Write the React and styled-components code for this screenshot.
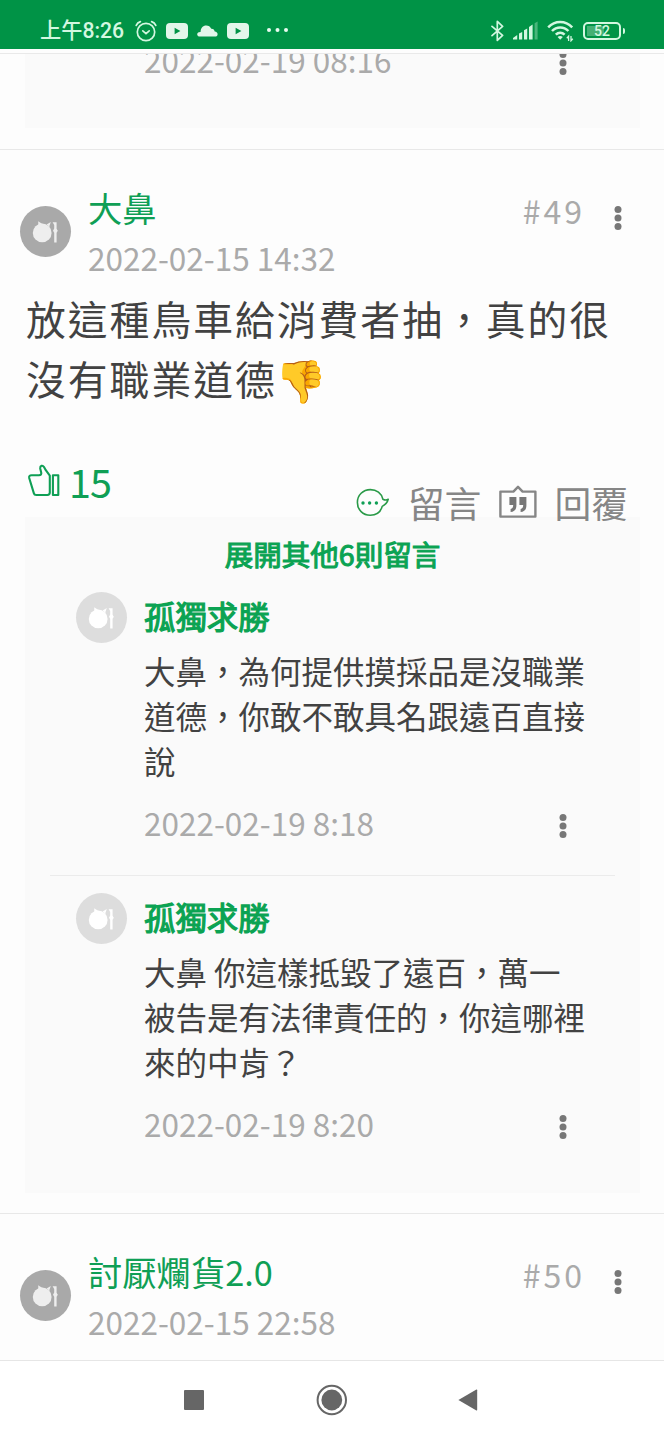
import React from 'react';
import styled, { createGlobalStyle } from 'styled-components';

const GlobalStyle = createGlobalStyle`
    * { box-sizing: border-box; }
    body {
        margin: 0;
        background: #fdfdfd;
        font-family: "Noto Sans CJK TC", "Noto Sans", sans-serif;
    }
    svg { display: block; flex: none; }
`

const Phone = styled.div`
    width: 664px;
    height: 1440px;
    display: flex;
    flex-direction: column;
    overflow: hidden;
`

const StatusBar = styled.header`
    height: 49px;
    flex: none;
    padding: 12px 39px 0 40px;
    display: flex;
    align-items: center;
    justify-content: space-between;
    background: #009346;
    color: #d3f7e0;
`

const StatusGroup = styled.div`
    display: flex;
    align-items: center;
    gap: 9px;
`

const Time = styled.span`
    margin-right: 1.5px;
    font-family: Roboto, "Noto Sans CJK TC", sans-serif;
    font-size: 21.2px;
    font-weight: 500;
    line-height: 24px;
    white-space: nowrap;
`

const MoreWrap = styled.span`
    margin-left: 8px;
    margin-top: -2px;
`

const Feed = styled.main`
    flex: 1;
    min-height: 0;
    margin-top: 4px;
    border-top: 1px solid #e9e9e9;
    border-bottom: 1px solid #e6e6e6;
    overflow: hidden;
`

const Panel = styled.section`
    margin: 0 24px 0 25px;
    padding-bottom: 17px;
    background: #fafafa;
`

const TailPanel = styled(Panel)`
    display: flow-root;
    height: 74px;
    margin-bottom: 21px;
    padding: 0 25px;
`

const Post = styled.article`
    border-top: 1px solid #e8e8e8;
    padding-top: 32px;
    padding-bottom: 20px;
`

const PostHead = styled.div`
    display: flex;
    height: 100px;
    padding: 0 32px 0 20px;
`

const AvatarBox = styled.div`
    width: 51px;
    height: 51px;
    flex: none;
    margin-top: ${(p) => p.top || 0}px;
    margin-right: 17px;
    border-radius: 50%;
    background: ${(p) => (p.light ? '#dddddd' : '#a9a9a9')};
    color: ${(p) => (p.light ? '#ffffff' : '#eeeeee')};
`

const Who = styled.div`
    flex: 1;
`

const Name = styled.div`
    font-size: 34.3px;
    line-height: 50px;
    color: #0f9f55;
`

const DateText = styled.div`
    font-size: 31.5px;
    line-height: ${(p) => p.lh || 50}px;
    color: #aaaaaa;
    white-space: nowrap;
`

const Floor = styled.div`
    font-size: 32px;
    line-height: 56px;
    letter-spacing: 3px;
    color: #aaaaaa;
`

const MenuButton = styled.button`
    width: 28px;
    height: 38px;
    padding: 0;
    border: 0;
    margin-top: ${(p) => p.top || 0}px;
    margin-left: ${(p) => p.left || 0}px;
    display: flex;
    align-items: center;
    justify-content: center;
    background: none;
    color: #777777;
`

const Body = styled.p`
    margin: 6px 26px 0;
    font-size: 39.8px;
    line-height: 60px;
    letter-spacing: 2px;
    color: #424242;
`

const Emoji = styled.span`
    margin-left: -2px;
    font-size: 41.5px;
    line-height: 0;
    vertical-align: -1px;
`

const Actions = styled.div`
    position: relative;
    z-index: 1;
    height: 109px;
    padding: 0 36px 0 26px;
    display: flex;
    justify-content: space-between;
`

const Likes = styled.div`
    display: flex;
    height: 48px;
    margin-top: 50px;
    gap: 7px;
    align-items: center;
    font-size: 39.6px;
    letter-spacing: -1px;
    color: #0f9f55;
`

const LikeCount = styled.span`
    line-height: 46px;
    padding-bottom: 2px;
`

const Replies = styled.div`
    display: flex;
    height: 48px;
    margin-top: 70px;
    align-items: center;
    font-size: 36.8px;
    color: #868686;
    white-space: nowrap;
`

const ActionText = styled.span`
    line-height: 48px;
    margin-left: ${(p) => p.left}px;
    margin-right: ${(p) => p.right || 0}px;
`

const Expand = styled.div`
    padding-top: 16px;
    font-size: 28.5px;
    line-height: 42px;
    text-align: center;
    color: #0ba353;
    -webkit-text-stroke: 1.1px #0ba353;
`

const Comment = styled.div`
    display: flex;
    height: 300px;
    margin: 0 25px;
    padding: 17px 0 0 26px;
`

const Divider = styled.div`
    height: 1px;
    margin: 0 25px;
    background: #ebebeb;
`

const CommentMain = styled.div`
    width: 443px;
`

const CommentName = styled.div`
    font-size: 31.4px;
    line-height: 47px;
    color: #0ba353;
    -webkit-text-stroke: 1.2px #0ba353;
`

const CommentText = styled.p`
    margin: 9px 0 16px;
    font-size: 31.5px;
    line-height: 45px;
    color: #424242;
`

const CommentFoot = styled.div`
    display: flex;
    justify-content: space-between;
    padding-right: 10px;
`

const TailFoot = styled(CommentFoot)`
    width: 443px;
    margin-left: 94px;
    margin-top: -18px;
`

const NavBar = styled.nav`
    height: 79px;
    flex: none;
    padding: 0 186px 1px 184px;
    display: flex;
    align-items: center;
    justify-content: space-between;
    background: #ffffff;
    color: #666666;
`

const Dots = () => (
    <svg width="8" height="26" viewBox="0 0 8 26" fill="currentColor">
        <circle cx="4" cy="4.5" r="3.5" />
        <circle cx="4" cy="13" r="3.5" />
        <circle cx="4" cy="21.5" r="3.5" />
    </svg>
)

const Avatar = ({ light, top }) => (
    <AvatarBox light={light ? 1 : 0} top={top}>
        <svg width="51" height="51" viewBox="0 0 51 51" fill="currentColor">
            <circle cx="22.2" cy="26.9" r="9.4" />
            <path d="M18.2 15.2 L22.4 18 L18.4 19.6 Z" />
            <path d="M30.8 16 L26.6 18.4 L29.2 20.8 Z" />
            <path d="M32.6 16.2 H36.6 V22.8 L37.8 24.7 L36.6 26.8 V36.4 H34.2 V26.8 L33 24.7 L34.2 22.6 V19 Z" />
        </svg>
    </AvatarBox>
)

const AlarmIcon = () => (
    <svg width="22" height="22" viewBox="0 0 22 22" fill="none" stroke="currentColor" strokeWidth="1.7" strokeLinecap="round">
        <circle cx="11" cy="12" r="8.7" />
        <path d="M7.8 10.8 L11 13.6 L14.2 10.8" />
        <path d="M1.2 5.4 C2 3.6 3.6 2.2 5.4 1.6 M20.8 5.4 C20 3.6 18.4 2.2 16.6 1.6" />
    </svg>
)

const VideoIcon = () => (
    <svg width="22" height="16" viewBox="0 0 22 16">
        <rect width="22" height="16" rx="4" fill="#e2f6ea" />
        <path d="M8.6 4.8 L14.4 8 L8.6 11.2 Z" fill="#009346" />
    </svg>
)

const CloudIcon = () => (
    <svg width="21" height="12" viewBox="0 0 21 12" fill="#e2f6ea">
        <path d="M3 11.5 C1 11.5 0 10.3 0.2 8.9 C0.4 7.6 1.8 6.8 3.6 7 C3.6 2.9 6 0.4 9.2 0.4 C11.5 0.4 13.4 1.6 14.3 3.7 C16.4 3.6 17.4 4.8 17.7 6.6 C19.6 6.8 20.6 7.9 20.6 9.2 C20.6 10.7 19.6 11.5 18 11.5 Z" />
    </svg>
)

const MoreIcon = () => (
    <svg width="24" height="6" viewBox="0 0 24 6" fill="#e8fbf0">
        <circle cx="3" cy="3" r="2" />
        <circle cx="11.5" cy="3" r="2" />
        <circle cx="20" cy="3" r="2" />
    </svg>
)

const BluetoothIcon = () => (
    <svg width="13" height="22" viewBox="0 0 13 22" fill="none" stroke="currentColor" strokeWidth="1.7" strokeLinejoin="round" strokeLinecap="round">
        <path d="M1 6.4 L11.6 15.4 L6.3 20.4 V1.4 L11.6 6.4 L1 15.6" />
    </svg>
)

const SignalIcon = () => (
    <svg width="25" height="19" viewBox="0 0 25 19" fill="currentColor">
        <path d="M0 18.5 V17 L4.2 14 V18.5 Z M6 12.6 L9.2 11 V18.5 H6 Z M11 9.3 L14.2 7.5 V18.5 H11 Z M16 6 L19.6 3.6 V18.5 H16 Z" />
        <path d="M21.6 2.2 L24.6 0.4 V18.5 H21.6 Z" opacity="0.35" />
    </svg>
)

const WifiIcon = () => (
    <svg width="27" height="22" viewBox="0 0 27 22" fill="none" stroke="currentColor" strokeWidth="2.5">
        <path d="M1.2 7.4 C8 0.2 18.4 0.2 25.2 7.4" />
        <path d="M5 11 C9.6 6.2 16.8 6.2 21.4 11" />
        <path d="M8.8 14.6 C11.4 12 15 12 17.6 14.6" />
        <path d="M13.2 19.8 L10.6 17 C12 15.8 14.4 15.8 15.8 17 Z" fill="currentColor" stroke="none" />
        <path d="M21.6 21 V16.2 L19.8 18.2 M24 16 V20.8 L25.8 18.8" strokeWidth="1.3" />
    </svg>
)

const Battery = styled.div`
    display: flex;
    align-items: center;
    gap: 2px;
`

const BatteryCell = styled.div`
    width: 38px;
    height: 18px;
    border: 2px solid currentColor;
    border-radius: 5px;
    padding: 1px;
    font: 500 14px/13px Roboto, sans-serif;
    text-align: center;
    background: linear-gradient(90deg, #45b074 17px, transparent 17px) 2px 2px / 34px 10px no-repeat;
`

const BatteryTip = styled.div`
    width: 2px;
    height: 6px;
    border-radius: 0 2px 2px 0;
    background: currentColor;
`

const ThumbIcon = () => (
    <svg width="36" height="36" viewBox="0 0 36 36" fill="none" stroke="#0f9f55" strokeWidth="2.1" strokeLinejoin="round">
        <path d="M3.2 14 C2.8 12 3.8 11.2 5.6 11.2 H13 C14.8 11.2 15.6 10.2 15.2 8.6 L14.2 4.4 C14 1.6 16.6 0.8 18 3 L19.8 6.2 L23.8 11.6 V28.6 C23.8 30.2 23 31 21.4 31 H10.2 C8.8 31 8.2 30.6 7.9 29.4 Z" />
        <rect x="26.9" y="11.2" width="5.4" height="19.8" />
    </svg>
)

const BubbleIcon = () => (
    <svg width="34" height="28" viewBox="0 1 34 28" fill="none" stroke="#2a9a48" strokeWidth="1.6" strokeLinejoin="round">
        <path d="M32.2 12.3 C30.4 13.3 28.8 13.2 26.9 12.2 C25.5 6.4 20.6 2.6 14.4 2.6 C7 2.6 1.4 8.2 1.4 15.4 C1.4 22.8 7 28.2 14.2 28.2 C19.8 28.2 24.6 25.2 26.2 19.4 C29.2 17.8 31.4 15.6 32.2 12.3 Z" />
        <g fill="#0f9f55" stroke="none">
            <circle cx="7" cy="16" r="1.7" />
            <circle cx="13.6" cy="16" r="1.7" />
            <circle cx="20.4" cy="16" r="1.7" />
        </g>
    </svg>
)

const QuoteIcon = () => (
    <svg width="38" height="34" viewBox="0 0 38 34" fill="none" stroke="#868686" strokeWidth="2.4" strokeLinejoin="round">
        <path d="M1.4 6.6 H14.4 L19 1.8 L23.6 6.6 H36.4 V31.6 H1.4 Z" />
        <path d="M10.4 12 H17.4 V20.4 C17.4 24.4 15.4 26.8 11.6 27 V24 C13.4 23.6 14.2 22.4 14.2 20 H10.4 Z M20.4 12 H27.4 V20.4 C27.4 24.4 25.4 26.8 21.6 27 V24 C23.4 23.6 24.2 22.4 24.2 20 H20.4 Z" fill="#777777" stroke="none" />
    </svg>
)

const comments = [
    {
        name: '孤獨求勝',
        text: '大鼻，為何提供摸採品是沒職業道德，你敢不敢具名跟遠百直接說',
        date: '2022-02-19 8:18',
    },
    {
        name: '孤獨求勝',
        text: '大鼻 你這樣抵毀了遠百，萬一被告是有法律責任的，你這哪裡來的中肯？',
        date: '2022-02-19 8:20',
    },
]

const Head = ({ name, date, floor }) => (
    <PostHead>
        <Avatar top={24} />
        <Who>
            <Name>{name}</Name>
            <DateText>{date}</DateText>
        </Who>
        <Floor>{floor}</Floor>
        <MenuButton top={17} left={19}><Dots /></MenuButton>
    </PostHead>
)

const App = () => {
    return (
        <>
            <GlobalStyle />
            <Phone>
                <StatusBar>
                    <StatusGroup>
                        <Time>上午8:26</Time>
                        <AlarmIcon />
                        <VideoIcon />
                        <CloudIcon />
                        <VideoIcon />
                        <MoreWrap><MoreIcon /></MoreWrap>
                    </StatusGroup>
                    <StatusGroup>
                        <BluetoothIcon />
                        <SignalIcon />
                        <WifiIcon />
                        <Battery>
                            <BatteryCell>52</BatteryCell>
                            <BatteryTip />
                        </Battery>
                    </StatusGroup>
                </StatusBar>

                <Feed>
                    <TailPanel>
                        <TailFoot>
                            <DateText lh={46}>2022-02-19 08:16</DateText>
                            <MenuButton top={8}><Dots /></MenuButton>
                        </TailFoot>
                    </TailPanel>

                    <Post>
                        <Head name="大鼻" date="2022-02-15 14:32" floor="#49" />
                        <Body>放這種鳥車給消費者抽，真的很沒有職業道德<Emoji>👎</Emoji></Body>
                        <Actions>
                            <Likes>
                                <ThumbIcon />
                                <LikeCount>15</LikeCount>
                            </Likes>
                            <Replies>
                                <BubbleIcon />
                                <ActionText left={18} right={18}>留言</ActionText>
                                <QuoteIcon />
                                <ActionText left={17}>回覆</ActionText>
                            </Replies>
                        </Actions>
                        <Panel>
                            <Expand>展開其他6則留言</Expand>
                            {comments.map((item, idx) => (
                                <React.Fragment key={idx}>
                                    {idx > 0 && <Divider />}
                                    <Comment>
                                        <Avatar light />
                                        <CommentMain>
                                            <CommentName>{item.name}</CommentName>
                                            <CommentText>{item.text}</CommentText>
                                            <CommentFoot>
                                                <DateText lh={46}>{item.date}</DateText>
                                                <MenuButton top={8}><Dots /></MenuButton>
                                            </CommentFoot>
                                        </CommentMain>
                                    </Comment>
                                </React.Fragment>
                            ))}
                        </Panel>
                    </Post>

                    <Post>
                        <Head name="討厭爛貨2.0" date="2022-02-15 22:58" floor="#50" />
                    </Post>
                </Feed>

                <NavBar>
                    <svg width="20" height="20"><rect width="20" height="20" rx="1" fill="currentColor" /></svg>
                    <svg width="32" height="32">
                        <circle cx="16.8" cy="16" r="14.2" fill="none" stroke="currentColor" strokeWidth="2" />
                        <circle cx="16.8" cy="16" r="10.4" fill="currentColor" />
                    </svg>
                    <svg width="20" height="22"><path d="M0.4 11 L18.4 0.6 Q19.2 0.4 19.2 1.2 V20.8 Q19.2 21.6 18.4 21.4 Z" fill="currentColor" /></svg>
                </NavBar>
            </Phone>
        </>
    )
}

export default App;
